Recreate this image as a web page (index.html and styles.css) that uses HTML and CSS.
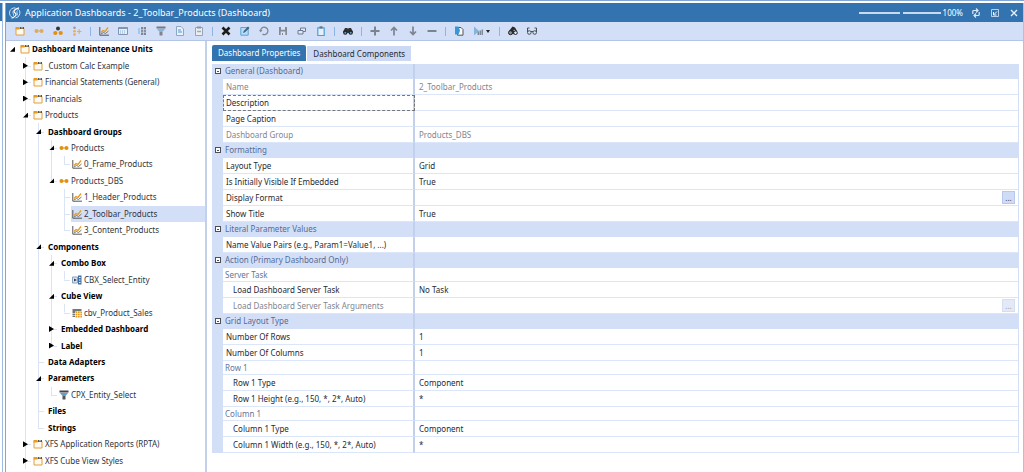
FILE: index.html
```html
<!DOCTYPE html>
<html lang="en">
<head>
<meta charset="utf-8">
<title>Application Dashboards</title>
<link rel="stylesheet" href="styles.css">
</head>
<body>
<svg class="defs" aria-hidden="true">
  <symbol id="unit" viewBox="0 0 10 10"><path d="M1 2.500h8v6.500H1z" fill="#fffaf0" stroke="#e0a040"/><path d="M.5 1h4v2.500h-4z" fill="#e79a1d"/><path d="M5 1h1.500v2H5zM7.500 1H9v2H7.500z" fill="#555"/></symbol>
  <symbol id="group" viewBox="0 0 10 10"><path d="M2 5h6" stroke="#e79a1d"/><circle cx="2.500" cy="5" r="2" fill="#e2900f"/><circle cx="7.500" cy="5" r="2" fill="#e2900f"/></symbol>
  <symbol id="dash" viewBox="0 0 10 10"><path d="M.8 1v8.200H10" fill="none" stroke="#555"/><path d="M2 6.500 4 4.500 6 5.500 9 1.500" fill="none" stroke="#e79a1d" stroke-width="1.300"/><path d="M2 8 4.500 6.500 6.500 7.500 9.500 5" fill="none" stroke="#777"/></symbol>
  <symbol id="combo" viewBox="0 0 10 10"><path d="M.5 2h5v6h-5z" fill="#dfe8f5" stroke="#8b9fb8"/><path d="M2 3.500 5 5 2 6.500z" fill="#345"/><path d="M6 .5h3.500v9H6z" fill="#3f6fa8"/><path d="M7 2.500h1.500M7 5h1.500M7 7.500h1.500" stroke="#fff"/></symbol>
  <symbol id="cube" viewBox="0 0 10 10"><path d="M.5 1h9v8h-9z" fill="#fff"/><path d="M.5 1h9v2.500h-9zM.5 3h2.500v6H.5z" fill="#777"/><path d="M3.500 4H10v5.500H3.500z" fill="#e79a1d"/><path d="M0 5.500h10M0 7.500h10M5.500 3v7M8 3v7" stroke="#fff" stroke-width=".6"/></symbol>
  <symbol id="funnel" viewBox="0 0 10 10"><path d="M.5 .5h9v2h-9z" fill="#444"/><path d="M1 3h8L6.500 6h-3z" fill="#5aa0d0"/><path d="M3.500 6h3v3.500h-3z" fill="#555"/></symbol>
</svg>
<div class="frame">
  <div class="edge"></div>
  <main class="window">
    <header class="title-bar">
      <svg class="logo" viewBox="0 0 12 12" fill="none" stroke="#cfe2f5"><path d="M4.500 10.800A5 5 0 0 1 6.500 1M8 1.400a5 5 0 0 1-1.500 9.500"/><path d="M10 .8C4 2.500 4.500 5 6.200 6S7.500 9.500 2.500 11.200" stroke="#fff" stroke-width="1.200"/><path d="M4.500 3.500C3 6 5 6.500 4.500 8.500M8.500 3.500C7 5 9 6.500 8 8.500"/></svg>
      <h1>Application Dashboards - 2_Toolbar_Products (Dashboard)</h1>
      <input class="zoom" type="range" min="0" max="200" value="106" aria-label="Zoom">
      <output>100%</output>
      <button class="win" aria-label="Refresh"><svg viewBox="0 0 10 10" fill="none" stroke="#dbe8f6" stroke-width="1.200"><path d="M1.800 6V3.500q0-1 1-1H7M5 .5l2 2-2 2M8.200 4v2.500q0 1-1 1H3M5 9.500l-2-2 2-2"/></svg></button>
      <button class="win" aria-label="Restore"><svg viewBox="0 0 10 10" fill="none" stroke="#b9d0ea"><path d="M1.500 1.500h7v7h-7z"/><path d="M7 3.500 4 6.500M3.500 4v3h3" stroke="#fff"/></svg></button>
      <button class="win" aria-label="Close"><svg viewBox="0 0 10 10"><path d="m2 2 6 6M8 2 2 8" stroke="#e6f0fa" stroke-width="1.400"/></svg></button>
    </header>
    <div class="toolbar" role="toolbar" aria-label="Dashboard tools">
      <button aria-label="New unit"><svg viewBox="0 0 10 10"><use href="#unit"/></svg></button>
      <button aria-label="New group"><svg class="faded" viewBox="0 0 10 10"><use href="#group"/></svg></button>
      <button aria-label="New component"><svg viewBox="0 0 10 10"><circle cx="5" cy="2.500" r="2" fill="#333"/><circle cx="2.300" cy="7" r="2.100" fill="#e2900f"/><circle cx="7.700" cy="7" r="2.100" fill="#e2900f"/></svg></button>
      <button aria-label="Add to group"><svg viewBox="0 0 10 10"><path d="M5 5.500h4.500M7.200 3.200v4.600" stroke="#e7ac55" stroke-width="1.200"/><circle cx="2.500" cy="1.800" r="1.300" fill="#999"/><circle cx="2.500" cy="5.200" r="1.300" fill="#e7ac55"/><circle cx="2.500" cy="8.500" r="1.300" fill="#e7ac55"/></svg></button>
      <span class="sep"></span>
      <button aria-label="New dashboard"><svg viewBox="0 0 10 10"><use href="#dash"/></svg></button>
      <button aria-label="New table"><svg viewBox="0 0 10 10"><path d="M.5 1.500h9v7h-9z" fill="#e6eefa" stroke="#8494ad"/><path d="M.5 1h9v2h-9z" fill="#8494ad"/><path d="M2 5h6M2 7h6" stroke="#7db4e0" stroke-dasharray="1 1"/></svg></button>
      <button aria-label="New adapter"><svg viewBox="0 0 10 10"><path d="M4 1h5v8H4z" fill="#7e8795"/><path d="M4 3.700h5M4 6.300h5M6.500 1v8" stroke="#d3dff6" stroke-width=".7"/><path d="M1 3h2M1 5h2M1 7h2" stroke="#6fb3e0"/></svg></button>
      <button aria-label="New parameter"><svg class="faded" viewBox="0 0 10 10"><use href="#funnel"/></svg></button>
      <button aria-label="New file"><svg viewBox="0 0 10 10"><path d="M1.500 .5h4.500L8.500 3v6.500h-7z" fill="#e9f1fb" stroke="#8fa5c2"/><path d="M3 6h4M3 4h3" stroke="#7db8e3" stroke-width="1.300"/></svg></button>
      <button aria-label="New string"><svg viewBox="0 0 10 10"><path d="M1.500 1.500h7v8h-7z" fill="#e9eef6" stroke="#98a3b3"/><path d="M3 .5h4v2H3z" fill="#8a94a3"/><path d="M3 5.500h2" stroke="#e7a23a" stroke-width="1.500"/><path d="M5 5.500h2" stroke="#6fb3e0" stroke-width="1.500"/></svg></button>
      <span class="sep"></span>
      <button aria-label="Delete"><svg viewBox="0 0 10 10"><path d="m1.500 1.500 7 7M8.500 1.500l-7 7" stroke="#1c1c1c" stroke-width="2.600"/></svg></button>
      <button aria-label="Edit"><svg viewBox="0 0 10 10"><path d="M.8 1.500h7.400v7.700H.8z" fill="#b9dcf4" stroke="#58a6d8"/><path d="m3 7 .7-2L8 .5 9.500 2 5 6.300z" fill="#3f6484"/></svg></button>
      <button aria-label="Undo"><svg viewBox="0 0 10 10"><path d="M1.500 5a3.700 3.700 0 1 1 2 3.200" fill="none" stroke="#7f8896" stroke-width="1.300"/><path d="M0 4h3.500L1.700 6.500z" fill="#7f8896"/></svg></button>
      <button aria-label="Save"><svg viewBox="0 0 10 10"><path d="M1 1h8v8H1z" fill="#838b98"/><path d="M3 1h4v2.700H3zM2.700 5.500h4.600V9H2.700z" fill="#d9e2f2"/><path d="M4 7h1v2H4z" fill="#838b98"/></svg></button>
      <button aria-label="Rename"><svg viewBox="0 0 10 10" fill="#dfe8f6" stroke="#6d7b90"><path d="M3.500 2h5v3.500h-5z"/><path d="M1 4.500h5V8H1z"/></svg></button>
      <button aria-label="Paste"><svg viewBox="0 0 10 10"><path d="M1.800 1.800h6.400v7.700H1.800z" fill="#e4f0fb" stroke="#4e9fd6" stroke-width="1.200"/><path d="M3.500 .3h3v2.200h-3z" fill="#6a7686"/></svg></button>
      <span class="sep"></span>
      <button aria-label="Find"><svg viewBox="0 0 10 10"><path d="M2 2h2.300l.7 1 .7-1H8l2 4-5 1-5-1z" fill="#333"/><circle cx="2.300" cy="6.500" r="2.200" fill="#222"/><circle cx="7.700" cy="6.500" r="2.200" fill="#222"/><circle cx="2.300" cy="6.700" r="1" fill="#5ba3d4"/><circle cx="7.700" cy="6.700" r="1" fill="#5ba3d4"/></svg></button>
      <span class="sep"></span>
      <button aria-label="Add"><svg viewBox="0 0 10 10"><path d="M.5 5h9M5 .5v9" stroke="#7c8490" stroke-width="2"/></svg></button>
      <button aria-label="Move up"><svg viewBox="0 0 10 10" fill="none" stroke="#7c8490" stroke-width="1.700"><path d="M5 9.500V1.500M2 4.500l3-3 3 3"/></svg></button>
      <button aria-label="Move down"><svg viewBox="0 0 10 10" fill="none" stroke="#7c8490" stroke-width="1.700"><path d="M5 .5v8M2 5.500l3 3 3-3"/></svg></button>
      <button aria-label="Remove"><svg viewBox="0 0 10 10"><path d="M.5 5h9" stroke="#7c8490" stroke-width="2"/></svg></button>
      <span class="sep"></span>
      <button aria-label="Copy page"><svg viewBox="0 0 10 10"><path d="M3.500 1.500h3.500l2 2v5.700H3.500z" fill="#f5f8fd" stroke="#555"/><path d="M1 .5h3.500l1.500 4-1.500 4H1z" fill="#3b97d3"/></svg></button>
      <button class="menu" aria-label="Run"><svg viewBox="0 0 10 10"><path d="m1 .5 5 4.500-5 4.500z" fill="#84b4dd"/><path d="M4.500 5.500H6V9H4.500zM6.500 4.500H8V9H6.500zM8.500 3.500H10V9H8.500z" fill="#7f8896"/></svg><span class="caret"></span></button>
      <span class="sep"></span>
      <button aria-label="Search objects"><svg viewBox="0 0 10 10"><path d="M1 5 4.500 .5 7 1.500 9 5 5 8.500z" fill="#2b2b2b"/><path d="M6 3.500 7.500 5H5.500z" fill="#d3dff6"/><circle cx="2.500" cy="6.700" r="2" fill="#8a8f98" stroke="#222"/><circle cx="7.500" cy="6.700" r="1.800" fill="#e4ebf8" stroke="#222"/></svg></button>
      <button aria-label="View"><svg viewBox="0 0 10 10" fill="none" stroke="#4a4f58"><circle cx="2.300" cy="6.500" r="1.800"/><circle cx="7.700" cy="6.500" r="1.800"/><path d="M.5 6V2h2M9.500 6V2h-2M4 5.500h2"/></svg></button>
    </div>
    <div class="content">
      <ul class="tree" role="tree" aria-label="Dashboard Maintenance Units">
        <li role="treeitem" aria-expanded="true"><i class="open"></i><svg><use href="#unit"/></svg><b>Dashboard Maintenance Units</b></li>
        <li role="treeitem" aria-expanded="false"><i></i><i class="mid shut"></i><svg><use href="#unit"/></svg>_Custom Calc Example</li>
        <li role="treeitem" aria-expanded="false"><i></i><i class="mid shut"></i><svg><use href="#unit"/></svg>Financial Statements (General)</li>
        <li role="treeitem" aria-expanded="false"><i></i><i class="mid shut"></i><svg><use href="#unit"/></svg>Financials</li>
        <li role="treeitem" aria-expanded="true"><i></i><i class="mid open"></i><svg><use href="#unit"/></svg>Products</li>
        <li role="treeitem" aria-expanded="true"><i></i><i class="bar"></i><i class="mid open"></i><b>Dashboard Groups</b></li>
        <li role="treeitem" aria-expanded="true"><i></i><i class="bar"></i><i class="bar"></i><i class="mid open"></i><svg><use href="#group"/></svg>Products</li>
        <li role="treeitem"><i></i><i class="bar"></i><i class="bar"></i><i class="bar"></i><i class="end"></i><svg><use href="#dash"/></svg>0_Frame_Products</li>
        <li role="treeitem" aria-expanded="true"><i></i><i class="bar"></i><i class="bar"></i><i class="end open"></i><svg><use href="#group"/></svg>Products_DBS</li>
        <li role="treeitem"><i></i><i class="bar"></i><i class="bar"></i><i></i><i class="mid"></i><svg><use href="#dash"/></svg>1_Header_Products</li>
        <li role="treeitem" aria-selected="true"><i></i><i class="bar"></i><i class="bar"></i><i></i><i class="mid"></i><span class="selected"><svg><use href="#dash"/></svg>2_Toolbar_Products</span></li>
        <li role="treeitem"><i></i><i class="bar"></i><i class="bar"></i><i></i><i class="end"></i><svg><use href="#dash"/></svg>3_Content_Products</li>
        <li role="treeitem" aria-expanded="true"><i></i><i class="bar"></i><i class="mid open"></i><b>Components</b></li>
        <li role="treeitem" aria-expanded="true"><i></i><i class="bar"></i><i class="bar"></i><i class="mid open"></i><b>Combo Box</b></li>
        <li role="treeitem"><i></i><i class="bar"></i><i class="bar"></i><i class="bar"></i><i class="end"></i><svg><use href="#combo"/></svg>CBX_Select_Entity</li>
        <li role="treeitem" aria-expanded="true"><i></i><i class="bar"></i><i class="bar"></i><i class="mid open"></i><b>Cube View</b></li>
        <li role="treeitem"><i></i><i class="bar"></i><i class="bar"></i><i class="bar"></i><i class="end"></i><svg><use href="#cube"/></svg>cbv_Product_Sales</li>
        <li role="treeitem" aria-expanded="false"><i></i><i class="bar"></i><i class="bar"></i><i class="mid shut"></i><b>Embedded Dashboard</b></li>
        <li role="treeitem" aria-expanded="false"><i></i><i class="bar"></i><i class="bar"></i><i class="end shut"></i><b>Label</b></li>
        <li role="treeitem"><i></i><i class="bar"></i><i class="mid"></i><b>Data Adapters</b></li>
        <li role="treeitem" aria-expanded="true"><i></i><i class="bar"></i><i class="mid open"></i><b>Parameters</b></li>
        <li role="treeitem"><i></i><i class="bar"></i><i class="bar"></i><i class="end"></i><svg><use href="#funnel"/></svg>CPX_Entity_Select</li>
        <li role="treeitem"><i></i><i class="bar"></i><i class="mid"></i><b>Files</b></li>
        <li role="treeitem"><i></i><i class="bar"></i><i class="end"></i><b>Strings</b></li>
        <li role="treeitem" aria-expanded="false"><i></i><i class="mid shut"></i><svg><use href="#unit"/></svg>XFS Application Reports (RPTA)</li>
        <li role="treeitem" aria-expanded="false"><i></i><i class="mid shut"></i><svg><use href="#unit"/></svg>XFS Cube View Styles</li>
      </ul>
      <section class="details">
        <div class="tabs" role="tablist">
          <button role="tab" aria-selected="true">Dashboard Properties</button>
          <button role="tab" aria-selected="false">Dashboard Components</button>
        </div>
        <table class="props">
          <colgroup><col class="c-toggle"><col class="c-name"><col></colgroup>
          <tr class="cat"><td><button class="fold" aria-label="Collapse General"></button></td><th>General (Dashboard)</th><td></td></tr>
          <tr class="off"><td></td><th>Name</th><td>2_Toolbar_Products</td></tr>
          <tr><td></td><th class="focus">Description</th><td></td></tr>
          <tr><td></td><th>Page Caption</th><td></td></tr>
          <tr class="off"><td></td><th>Dashboard Group</th><td>Products_DBS</td></tr>
          <tr class="cat"><td><button class="fold" aria-label="Collapse Formatting"></button></td><th>Formatting</th><td></td></tr>
          <tr><td></td><th>Layout Type</th><td>Grid</td></tr>
          <tr><td></td><th>Is Initially Visible If Embedded</th><td>True</td></tr>
          <tr><td></td><th>Display Format</th><td><button class="more" aria-label="Edit display format">...</button></td></tr>
          <tr><td></td><th>Show Title</th><td>True</td></tr>
          <tr class="cat"><td><button class="fold" aria-label="Collapse Literal Parameter Values"></button></td><th>Literal Parameter Values</th><td></td></tr>
          <tr><td></td><th>Name Value Pairs (e.g., Param1=Value1, ...)</th><td></td></tr>
          <tr class="cat"><td><button class="fold" aria-label="Collapse Action"></button></td><th>Action (Primary Dashboard Only)</th><td></td></tr>
          <tr class="sub"><td></td><th>Server Task</th><td></td></tr>
          <tr class="deep"><td></td><th>Load Dashboard Server Task</th><td>No Task</td></tr>
          <tr class="deep off"><td></td><th>Load Dashboard Server Task Arguments</th><td><button class="more" disabled aria-label="Edit task arguments">...</button></td></tr>
          <tr class="cat"><td><button class="fold" aria-label="Collapse Grid Layout Type"></button></td><th>Grid Layout Type</th><td></td></tr>
          <tr><td></td><th>Number Of Rows</th><td>1</td></tr>
          <tr><td></td><th>Number Of Columns</th><td>1</td></tr>
          <tr class="sub"><td></td><th>Row 1</th><td></td></tr>
          <tr class="deep"><td></td><th>Row 1 Type</th><td>Component</td></tr>
          <tr class="deep"><td></td><th>Row 1 Height (e.g., 150, *, 2*, Auto)</th><td>*</td></tr>
          <tr class="sub"><td></td><th>Column 1</th><td></td></tr>
          <tr class="deep"><td></td><th>Column 1 Type</th><td>Component</td></tr>
          <tr class="deep"><td></td><th>Column 1 Width (e.g., 150, *, 2*, Auto)</th><td>*</td></tr>
        </table>
      </section>
    </div>
  </main>
</div>
</body>
</html>
```
FILE: styles.css
```css
* { box-sizing: border-box; }
body {
  margin: 0;
  background: #fff;
  color: #262a33;
  font: 8px/12px "Noto Sans", "Open Sans", sans-serif;
}
button { margin: 0; padding: 0; border: 0; background: none; font: inherit; color: inherit; }
svg { display: block; flex: none; }
.defs { position: absolute; width: 0; height: 0; }

.frame { display: flex; min-height: 100vh; border-top: 1px solid #7fa6d6; padding-top: 2px; }
.edge { width: 3px; margin-right: 2px; border-right: 1px solid #9dbde0; background: linear-gradient(#3273b0 18px, #fff 18px); }
.window { flex: 1; min-width: 0; display: flex; flex-direction: column; border-left: 1px solid #7fa6d6; border-right: 1px solid #a9c3e0; }

.title-bar { display: flex; align-items: center; height: 19px; padding-left: 3px; background: #3273b0; color: #fff; }
.logo { width: 12px; height: 12px; margin-right: 4px; }
.title-bar h1 { flex: 1; margin: 0; font-size: 9px; font-weight: 400; white-space: nowrap; }
.title-bar output { margin: 0 3px 0 2px; }
.win { width: 19px; display: flex; justify-content: center; }
.win svg { width: 10px; height: 10px; }
.zoom { appearance: none; width: 82px; height: 2px; margin: 0; background: #c9daee; }
.zoom::-webkit-slider-thumb { appearance: none; width: 3px; height: 6px; background: #3273b0; }

.toolbar { display: flex; align-items: center; height: 19px; padding-left: 4px; background: #d3dff6; border-bottom: 1px solid #b3c5e8; }
.toolbar button { width: 19px; display: flex; justify-content: center; align-items: center; }
.toolbar svg { width: 10px; height: 10px; }
.toolbar .menu { width: 27px; gap: 3px; }
.caret { border: 2px solid transparent; border-top: 3px solid #222; border-bottom: 0; }
.faded { opacity: .65; }
.sep { width: 8px; height: 9px; background: linear-gradient(#8db4e2, #8db4e2) center / 1px 100% no-repeat; }

.content { flex: 1; display: flex; }
.tree { width: 201px; margin: 0; padding: 0 0 3px; list-style: none; display: grid; grid-auto-rows: 1fr; border-right: 2px solid #c3d0ec; }
.tree li { display: flex; align-items: center; white-space: nowrap; color: #30343c; }
.tree li > svg, .selected svg { width: 10px; height: 10px; margin: 0 2px 0 1px; }
.tree b { padding-left: 3px; color: #000; }
.tree svg + b { padding-left: 0; }
.tree i { position: relative; flex: none; width: 13px; align-self: stretch; }
.bar, .mid { background: linear-gradient(#dbe4f5, #dbe4f5) 6px 0 / 1px 100% no-repeat; }
.end { background: linear-gradient(#dbe4f5, #dbe4f5) 6px 0 / 1px 50% no-repeat; }
.mid::before, .end::before { content: ""; position: absolute; left: 6px; right: 1px; top: 50%; border-top: 1px solid #dbe4f5; }
.open::after, .shut::after { content: ""; position: absolute; inset: 0; margin: auto; width: 5px; height: 5px; background: #000; clip-path: polygon(100% 0, 100% 100%, 0 100%); }
.shut::after { height: 6px; clip-path: polygon(0 0, 100% 50%, 0 100%); }
.selected { flex: 1; align-self: stretch; display: flex; align-items: center; background: #d3dff6; }

.details { flex: 1; min-width: 0; padding: 4px 4px 0 5px; }
.tabs { display: flex; align-items: flex-start; gap: 1px; height: 19px; }
.tabs button { height: 15px; margin-top: 1px; padding: 0 6px; background: #cbd9f4; }
.tabs [aria-selected="true"] { height: 16px; margin-top: 0; background: #3273b0; color: #fff; border-radius: 2px 2px 0 0; }

.props { width: 100%; table-layout: fixed; border-collapse: separate; border-spacing: 0; border-right: 1px solid #d3dff6; }
.c-toggle { width: 11px; }
.c-name { width: 192px; }
.props tr { height: 16px; }
.props .cat { height: 15px; }
.props .sub { height: 14px; }
.props th, .props td { padding: 0; line-height: 12px; border-bottom: 1px solid #dbe6f8; font-weight: 400; text-align: left; white-space: nowrap; }
.props th { padding-left: 3px; border-right: 2px solid #c3d0ec; }
.props td:first-child { background: #d3dff6; border-color: #d3dff6; }
.props td:last-child { padding-left: 4px; }
.props .cat th, .props .cat td { background: #d3dff6; border-bottom-color: #d3dff6; color: #566b96; }
.props .cat th, .props .sub th { padding-left: 2px; }
.props .sub th { color: #64749a; }
.props .deep th { padding-left: 10px; }
.props .off { color: #82868e; }
.props .focus { outline: 1px dashed #777; outline-offset: -1px; }
.fold { display: block; width: 6px; height: 6px; margin: 0 auto; border: 1px solid #4a4f58; background: linear-gradient(#4a4f58, #4a4f58) center / 2px 1px no-repeat #fff; }
.more { display: block; width: 13px; height: 13px; margin: 0 3px 0 auto; line-height: 8px; border: 1px solid #b7c8e8; background: #cfdcf5; color: #345; }
.more:disabled { border-color: #d5dff0; background: #e3eaf7; color: #99a; }
```
